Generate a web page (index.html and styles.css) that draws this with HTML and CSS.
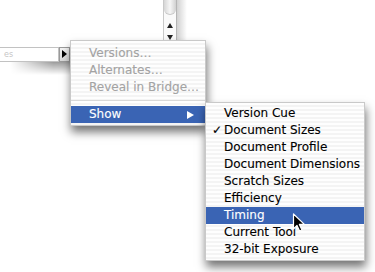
FILE: index.html
```html
<!DOCTYPE html>
<html>
<head>
  <meta charset="utf-8">
  <link rel="stylesheet" href="styles.css">
</head>
<body>
  <div class="stage">
    <!-- bits of the window behind the menus -->
    <div class="scroller">
      <div class="scroller-cap"></div>
      <div class="scroller-up"></div>
      <div class="scroller-down"></div>
    </div>
    <div class="scroller-shadow"></div>

    <div class="field-shadow"></div>
    <div class="field">
      <span class="field-text">es</span>
    </div>
    <div class="field-btn"><span class="field-arrow"></span></div>

    <!-- context menu -->
    <div class="menu menu-main">
      <div class="menu-item disabled">Versions…</div>
      <div class="menu-item disabled">Alternates…</div>
      <div class="menu-item disabled">Reveal in Bridge…</div>
      <div class="menu-sep"></div>
      <div class="menu-item selected has-sub">
        <span>Show</span>
        <span class="sub-arrow"></span>
      </div>
    </div>

    <div class="menu menu-sub">
      <div class="menu-item">Version Cue</div>
      <div class="menu-item checked">Document Sizes</div>
      <div class="menu-item">Document Profile</div>
      <div class="menu-item">Document Dimensions</div>
      <div class="menu-item">Scratch Sizes</div>
      <div class="menu-item">Efficiency</div>
      <div class="menu-item selected">Timing</div>
      <div class="menu-item">Current Tool</div>
      <div class="menu-item">32-bit Exposure</div>
    </div>

    <svg class="cursor" width="14" height="20" viewBox="0 0 14 20">
      <path d="M1.5 1 L1.5 16 L5 12.4 L7.6 18 L10 17 L7.4 11.4 L12.4 11.4 Z" fill="#000" stroke="#fff" stroke-width="1.2" stroke-linejoin="round"/>
    </svg>
  </div>
</body>
</html>
```

FILE: styles.css
```css
body {
  margin: 0;
  background: #fff;
  font-family: "DejaVu Sans", "Liberation Sans", sans-serif;
  font-size: 12px;
}

.stage {
  position: relative;
  width: 375px;
  height: 272px;
  overflow: hidden;
  background: #fff;
}

/* scroll arrows peeking at the top */
.scroller {
  position: absolute;
  left: 163px;
  top: -10px;
  width: 12px;
  height: 52px;
  border-left: 1px solid #c9c9c9;
  border-right: 1px solid #b5b5b5;
  background: #fafafa;
}

.scroller-cap {
  height: 24px;
  border-radius: 0 0 6px 6px;
  background: linear-gradient(to right, #d6d6d6, #f6f6f6 50%, #d0d0d0);
  border-bottom: 1px solid #c8c8c8;
}

.scroller-up {
  width: 0;
  height: 0;
  margin: 8px auto 0;
  border-left: 3px solid transparent;
  border-right: 3px solid transparent;
  border-bottom: 5px solid #222;
}

.scroller-down {
  width: 0;
  height: 0;
  margin: 7px auto 0;
  border-left: 3px solid transparent;
  border-right: 3px solid transparent;
  border-top: 5px solid #222;
}

.scroller-shadow {
  position: absolute;
  left: 177px;
  top: 0;
  width: 10px;
  height: 42px;
  background: linear-gradient(to right, rgba(0, 0, 0, 0.18), rgba(0, 0, 0, 0));
}

/* text field on the left */
.field {
  position: absolute;
  left: -2px;
  top: 47px;
  width: 60px;
  height: 13px;
  border: 1px solid #c2c2c2;
  border-left: none;
  background: #fff;
}

.field-text {
  display: block;
  padding-left: 6px;
  font-size: 8px;
  line-height: 13px;
  color: #c6c6c6;
}

.field-btn {
  position: absolute;
  left: 59px;
  top: 47px;
  width: 9px;
  height: 13px;
  border: 1px solid #9a9a9a;
  background: linear-gradient(#f4f4f4, #d8d8d8);
}

.field-arrow {
  position: absolute;
  left: 2px;
  top: 2px;
  width: 0;
  height: 0;
  border-top: 4px solid transparent;
  border-bottom: 4px solid transparent;
  border-left: 5px solid #000;
}

.field-shadow {
  position: absolute;
  left: 10px;
  top: 60px;
  width: 62px;
  height: 15px;
  background: linear-gradient(rgba(0, 0, 0, 0.45), rgba(0, 0, 0, 0));
  -webkit-mask-image: linear-gradient(to right, transparent, #000 70%);
  mask-image: linear-gradient(to right, transparent, #000 70%);
}

/* menus */
.menu {
  position: absolute;
  border: 1px solid #c9c9c9;
  background: repeating-linear-gradient(#fefefe 0, #fefefe 2px, #f4f4f4 2px, #f4f4f4 4px);
  box-shadow: 1px 6px 9px rgba(0, 0, 0, 0.55);
  -webkit-text-stroke: 0.12px currentColor;
}

.menu-main {
  left: 70px;
  top: 40px;
  width: 134px;
  padding: 4px 0 2px;
}

.menu-sub {
  left: 205px;
  top: 102px;
  width: 158px;
  padding: 2px 0 2px;
}

.menu-item {
  position: relative;
  height: 17px;
  line-height: 17px;
  padding-left: 18px;
  color: #000;
  white-space: nowrap;
}

.menu-item.disabled {
  color: #a3a3a3;
}

.menu-item.selected {
  background: #3a64b4;
  color: #fff;
}

.menu-item.checked::before {
  content: "✓";
  position: absolute;
  left: 6px;
  top: 0;
  font-size: 12px;
  font-weight: bold;
}

.has-sub {
  display: flex;
  justify-content: space-between;
  align-items: center;
  padding-right: 11px;
}

.sub-arrow {
  width: 0;
  height: 0;
  border-top: 4px solid transparent;
  border-bottom: 4px solid transparent;
  border-left: 7px solid #fff;
}

.menu-sep {
  height: 10px;
  background: linear-gradient(transparent 4px, #d8d8d8 4px, #d8d8d8 5px, transparent 5px);
}

.cursor {
  position: absolute;
  left: 292px;
  top: 213px;
}
```
